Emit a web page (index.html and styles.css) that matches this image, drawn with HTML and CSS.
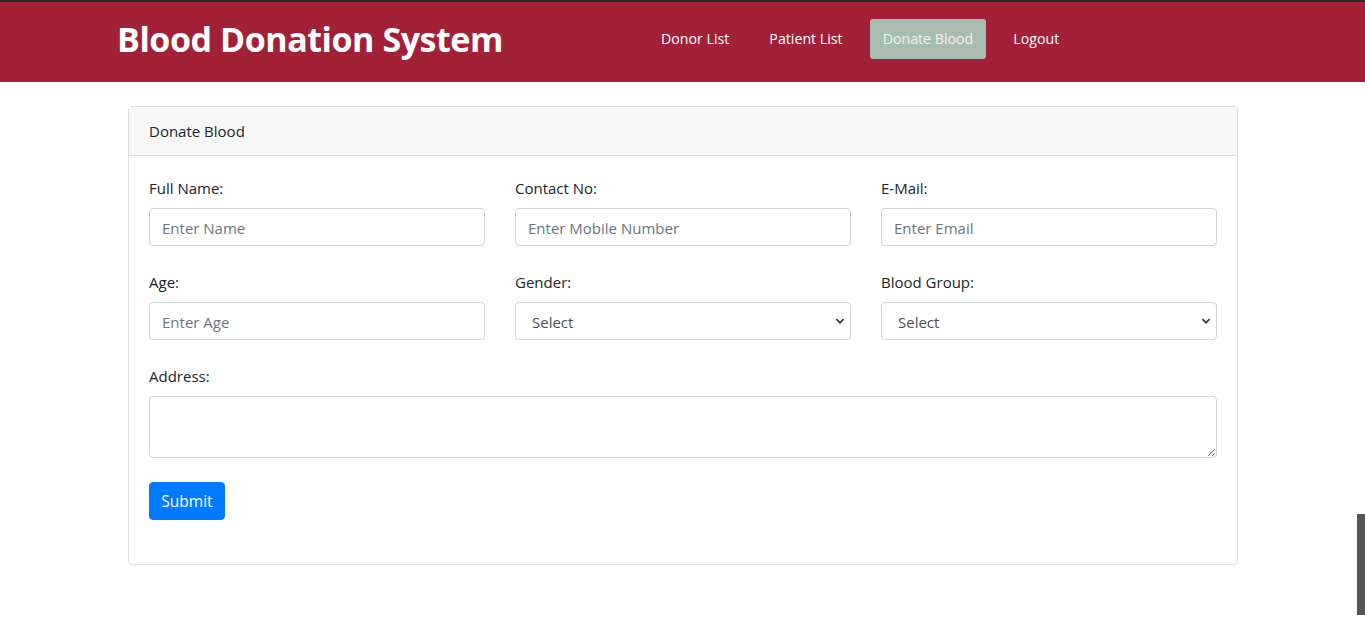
FILE: index.html
```html
<!DOCTYPE html>
<html lang="en">
<head>
<meta charset="utf-8">
<title>Blood Donation System</title>
<link rel="stylesheet" href="styles.css">
</head>
<body>
<header class="navbar">
  <div class="nav-inner">
    <a class="brand" href="#">Blood Donation System</a>
    <nav class="nav-links">
      <a class="nav-link" href="#">Donor List</a>
      <a class="nav-link" href="#">Patient List</a>
      <a class="nav-link active" href="#">Donate Blood</a>
      <a class="nav-link" href="#">Logout</a>
    </nav>
  </div>
</header>
<main class="container">
  <section class="card">
    <div class="card-header">Donate Blood</div>
    <form class="card-body">
      <div class="grid">
        <div class="field">
          <label>Full Name:</label>
          <input class="control" type="text" placeholder="Enter Name">
        </div>
        <div class="field">
          <label>Contact No:</label>
          <input class="control" type="text" placeholder="Enter Mobile Number">
        </div>
        <div class="field">
          <label>E-Mail:</label>
          <input class="control" type="text" placeholder="Enter Email">
        </div>
        <div class="field">
          <label>Age:</label>
          <input class="control" type="text" placeholder="Enter Age">
        </div>
        <div class="field">
          <label>Gender:</label>
          <div class="select-wrap">
            <select class="control select"><option>Select</option></select>
            <svg class="chevron" width="10" height="8" viewBox="0 0 10 8"><path d="M1.5 2.2 L5 5.8 L8.5 2.2" fill="none" stroke="#333" stroke-width="1.8"/></svg>
          </div>
        </div>
        <div class="field">
          <label>Blood Group:</label>
          <div class="select-wrap">
            <select class="control select"><option>Select</option></select>
            <svg class="chevron" width="10" height="8" viewBox="0 0 10 8"><path d="M1.5 2.2 L5 5.8 L8.5 2.2" fill="none" stroke="#333" stroke-width="1.8"/></svg>
          </div>
        </div>
        <div class="field wide">
          <label>Address:</label>
          <textarea class="control area" rows="2"></textarea>
        </div>
      </div>
      <div class="actions">
        <button class="btn" type="button">Submit</button>
      </div>
    </form>
  </section>
</main>
<div class="side-bar"></div>
</body>
</html>
```
FILE: styles.css
```css
* { box-sizing: border-box; }
html, body { margin: 0; padding: 0; }
body {
  font-family: "Open Sans", "Noto Sans", Arial, sans-serif;
  font-size: 15px;
  line-height: 24px;
  color: #212529;
  background: #fff;
  height: 625px;
  overflow: hidden;
  position: relative;
}
.navbar {
  background: #a22137;
  border-top: 2px solid #2b2b2b;
  height: 82px;
}
.nav-inner {
  display: flex;
  align-items: center;
  height: 80px;
  padding-left: 117px;
}
.brand {
  color: #fff;
  text-decoration: none;
  font-weight: 700;
  font-size: 34px;
  line-height: 40px;
  letter-spacing: -0.45px;
  width: 531px;
  margin-top: -6px;
}
.nav-links {
  display: flex;
  gap: 14px;
  margin-top: -6px;
}
.nav-link {
  color: #fff;
  text-decoration: none;
  padding: 8px 13px;
  border-radius: 3px;
  font-size: 14.2px;
}
.nav-link.active {
  background: #a9bcb0;
  color: #f4f4f4;
}
.container {
  width: 1110px;
  margin: 24px auto 0;
  padding: 0;
  position: relative;
  left: 0.5px;
}
.card {
  border: 1px solid #dedede;
  border-radius: 4px;
}
.card-header {
  background: #f7f7f7;
  border-bottom: 1px solid #dedede;
  padding: 12px 20px;
  height: 49px;
}
.card-body {
  padding: 20px 20px 20px;
}
.grid {
  display: grid;
  grid-template-columns: repeat(3, 1fr);
  column-gap: 30px;
  row-gap: 24px;
}
.field { display: flex; flex-direction: column; }
.field.wide { grid-column: 1 / -1; }
.field label { margin-bottom: 8px; }
.control {
  font-family: inherit;
  font-size: 15px;
  color: #495057;
  height: 38px;
  width: 100%;
  padding: 7px 12px 5px;
  border: 1px solid #ced4da;
  border-radius: 4px;
  background: #fff;
  outline: none;
}
.control::placeholder { color: #6c757d; }
.select-wrap { position: relative; }
.select {
  appearance: none;
  -webkit-appearance: none;
  padding-left: 16px;
  color: #495057;
}
.chevron {
  position: absolute;
  right: 6px;
  top: 15px;
  pointer-events: none;
}
.area {
  height: 62px;
  resize: vertical;
}
.actions { margin-top: 24px; margin-bottom: 24px; }
.btn {
  font-family: inherit;
  font-size: 15.5px;
  color: #fff;
  background: #007bff;
  border: 1px solid #007bff;
  border-radius: 4px;
  height: 38px;
  padding: 0;
  width: 76px;
}
.side-bar {
  position: absolute;
  right: 0;
  top: 514px;
  width: 8px;
  height: 101px;
  background: #555;
}
```
